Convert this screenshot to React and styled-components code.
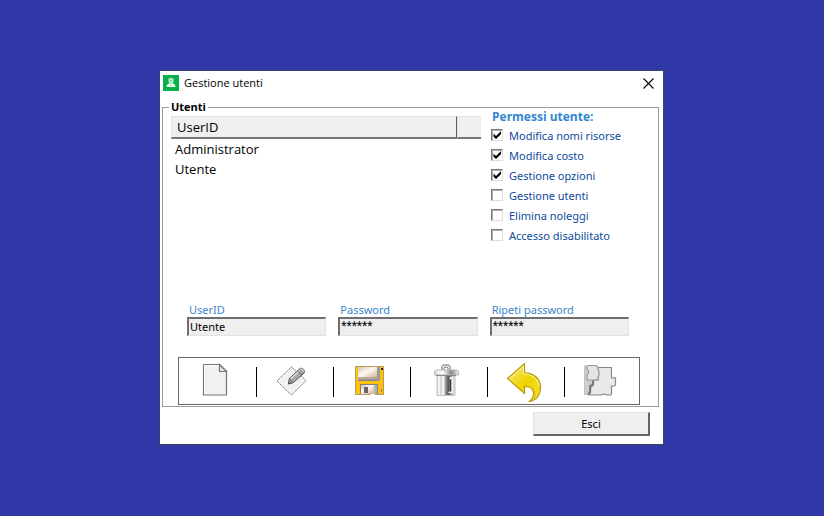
import { useState } from "react";
import styled, { createGlobalStyle } from "styled-components";

const PERMISSIONS = [
  { id: "risorse", label: "Modifica nomi risorse", checked: true },
  { id: "costo", label: "Modifica costo", checked: true },
  { id: "opzioni", label: "Gestione opzioni", checked: true },
  { id: "utenti", label: "Gestione utenti", checked: false },
  { id: "noleggi", label: "Elimina noleggi", checked: false },
  { id: "accesso", label: "Accesso disabilitato", checked: false },
];

const USERS = ["Administrator", "Utente"];

const AppIcon = () => (
  <svg width="16" height="16" viewBox="0 0 16 16" aria-hidden="true">
    <rect width="16" height="16" fill="#06b04c" />
    <path d="M5.500 4.200c.5-1.600 4.500-1.600 5 0v2.300l-1 1.500h-3l-1-1.500z" fill="#c9f0d7" />
    <path d="M6.800 4.500h2.400v1.800H6.800z" fill="#6fd08f" />
    <path d="M3.500 12c0-2.600 1.600-3.400 3-3.800h3c1.400.4 3 1.200 3 3.800z" fill="#e9fbf0" />
    <path d="M7.300 9.500h1.500v1H7.300z" fill="#8fdba9" />
  </svg>
);

const CloseIcon = () => (
  <svg width="11" height="11" viewBox="0 0 11 11" aria-hidden="true">
    <path d="M.5.5l10 10M10.500.5l-10 10" stroke="#000" strokeWidth="1.100" />
  </svg>
);

const NewIcon = () => (
  <svg width="40" height="40" viewBox="0 0 40 40" aria-hidden="true">
    <defs>
      <linearGradient id="fold" x1="0" y1="1" x2="1" y2="0">
        <stop offset="0" stopColor="#fff" />
        <stop offset="1" stopColor="#aaa" />
      </linearGradient>
    </defs>
    <path d="M6 2.500h15.500l7 7v23.500H5.500V3z" fill="#f1f1f1" stroke="#767676" strokeWidth="1.200" />
    <path d="M6.500 32V3.500h14" fill="none" stroke="#fff" />
    <path d="M21.500 2.500v7h7z" fill="url(#fold)" stroke="#767676" strokeWidth="1.200" />
  </svg>
);

const EditIcon = () => (
  <svg width="40" height="40" viewBox="0 0 40 40" aria-hidden="true">
    <path d="M16.500 5L31 18.500 16.500 33 2 19z" fill="#f1f1f1" stroke="#666" strokeDasharray="1.500 .7" />
    <path d="M16.500 6.500L29.500 18.500 16.500 31.500 3.500 19z" fill="none" stroke="#fff" />
    <path d="M13.500 22l.8-5.500L24.500 7l4.700 4L18 20.800z" fill="#a8a8a8" stroke="#555" />
    <path d="M15.500 16.800L24.500 8.800" stroke="#ddd" strokeWidth="1.500" />
    <path d="M14.300 16.500l3.700 4.300M22.500 9l4.500 4" stroke="#666" />
    <path d="M24.500 7c1.800-2.200 6.300.5 4.700 4" fill="#ccc" stroke="#777" />
    <path d="M13.300 22.200l.5-2.500 1.700 1.800z" fill="#444" />
  </svg>
);

const SaveIcon = () => (
  <svg width="40" height="40" viewBox="0 0 40 40" aria-hidden="true">
    <defs>
      <linearGradient id="plate" x1="0" y1="0" x2="1" y2="1">
        <stop offset="0" stopColor="#dcbda5" />
        <stop offset=".45" stopColor="#fdf9f5" />
        <stop offset="1" stopColor="#d5ad8b" />
      </linearGradient>
    </defs>
    <path d="M3.500 4.500h28v28h-8l-2-1h-2l-1 1h-15z" fill="#ffc20a" stroke="#b59b5d" />
    <path d="M6 5h22v14H6z" fill="#858585" />
    <path d="M6 5h20v10.500H6z" fill="url(#plate)" />
    <path d="M6 15.500h20v2H6z" fill="#b9aca0" />
    <path d="M25 5h3v14h-3z" fill="#9a9a9a" />
    <path d="M29 6h2v2h-2z" fill="#332600" />
    <path d="M8 22h18v10H8z" fill="#808080" />
    <path d="M9 23h13v9H9z" fill="url(#plate)" />
    <path d="M22 23h3v9h-3z" fill="#b4b4b4" />
    <path d="M12 25h4v6h-4z" fill="#666" />
    <path d="M29 27h1v3h-1z" fill="#a5803a" />
  </svg>
);

const DeleteIcon = () => (
  <svg width="40" height="40" viewBox="0 0 40 40" aria-hidden="true">
    <defs>
      <linearGradient id="can">
        <stop offset="0" stopColor="#ccc" />
        <stop offset=".12" stopColor="#fff" />
        <stop offset=".22" stopColor="#ccc" />
        <stop offset=".35" stopColor="#fff" />
        <stop offset=".5" stopColor="#888" />
        <stop offset=".65" stopColor="#555" />
        <stop offset=".85" stopColor="#bbb" />
        <stop offset="1" stopColor="#e6e6e6" />
      </linearGradient>
      <linearGradient id="lid">
        <stop offset="0" stopColor="#ddd" />
        <stop offset=".35" stopColor="#fff" />
        <stop offset=".7" stopColor="#888" />
        <stop offset="1" stopColor="#eee" />
      </linearGradient>
    </defs>
    <path d="M13 8V5l1.500-2h5L21 5v3" fill="none" stroke="#b0b0b0" strokeWidth="2" />
    <path d="M15 8V6l1-1h2l1 1v2" fill="none" stroke="#777" />
    <path d="M8 13h18v20.500H8z" fill="url(#can)" stroke="#c4c4c4" />
    <path d="M20.500 16.500l3-1v15h-4" fill="none" stroke="#f4f4f4" strokeWidth="1.500" />
    <path d="M21.500 18v11" stroke="#333" />
    <path d="M5.500 9l2-1h20l2 1v4h-24z" fill="url(#lid)" stroke="#b8b8b8" />
    <path d="M7 13.500h20" stroke="#888" />
  </svg>
);

const UndoIcon = () => (
  <svg width="40" height="40" viewBox="0 0 40 40" aria-hidden="true">
    <defs>
      <linearGradient id="arrow" x1="0" y1="0" x2="1" y2="1">
        <stop offset="0" stopColor="#f9ed8d" />
        <stop offset=".5" stopColor="#f0d400" />
        <stop offset="1" stopColor="#f6df38" />
      </linearGradient>
    </defs>
    <path
      d="M1.500 16.500L18.500 1.500v9.300c9.500 0 16 6.200 16 14.500 0 7.700-4.300 13.200-11 14.200 5.500-4.300 6.800-15-5-15v7z"
      fill="url(#arrow)"
      stroke="#b89a08"
      strokeWidth="1.200"
    />
    <path d="M3.800 16.600L17.300 4.500v7.300c8.500.2 14.700 5 15.700 12" fill="none" stroke="#fbf4b0" />
    <path d="M17.500 23.300c9-.4 13.500 5.500 10.500 13" fill="none" stroke="#e8c700" strokeWidth="1.500" />
  </svg>
);

const ModuleIcon = () => (
  <svg width="40" height="40" viewBox="0 0 40 40" aria-hidden="true">
    <path d="M2 3.500h4V18h5v4l-3 2v6l-2 3H2z" fill="#cdcdcd" />
    <path
      d="M16 5.500h13.500v10.500h1.500l1-.5 1.500.8v6.500l-1 1.200h-3v8l-1 1h-4l-1-.7h-3l-1 .7H8l1-8 2.500-2V18H16z"
      fill="#e9e9e9"
      stroke="#8a8a8a"
      strokeWidth="1.200"
    />
    <path d="M11 18v4.500L8 24v5.500L6 33" fill="none" stroke="#757575" strokeWidth="1.800" />
    <path
      d="M5 4.500l1-1h8l2 1.500v3l1 1.500v4L16 15v2l-1.500 1H6l-1-1v-4l1.500-2V9L5 7z"
      fill="#e4e4e4"
      stroke="#999"
      strokeWidth="1.200"
    />
    <path d="M2.500 3.500v30" stroke="#b5b5b5" strokeDasharray="1 1" />
  </svg>
);

const TOOLS = [
  { name: "Nuovo", Icon: NewIcon },
  { name: "Modifica", Icon: EditIcon },
  { name: "Salva", Icon: SaveIcon },
  { name: "Elimina", Icon: DeleteIcon },
  { name: "Annulla", Icon: UndoIcon },
  { name: "Moduli", Icon: ModuleIcon },
];

const App = () => {
  const [permissions, setPermissions] = useState(PERMISSIONS);
  const [form, setForm] = useState({ user: "Utente", password: "******", repeat: "******" });

  const toggle = (id) =>
    setPermissions(permissions.map((p) => (p.id === id ? { ...p, checked: !p.checked } : p)));

  const change = (key) => (e) => setForm({ ...form, [key]: e.target.value });

  return (
    <Desktop>
      <GlobalStyle />
      <Window>
        <TitleBar>
          <AppIcon />
          <Title>Gestione utenti</Title>
          <CloseButton type="button" aria-label="Chiudi">
            <CloseIcon />
          </CloseButton>
        </TitleBar>
        <Group>
          <GroupTitle>Utenti</GroupTitle>
          <Columns>
            <UserTable>
              <thead>
                <tr>
                  <HeadCell $divider>UserID</HeadCell>
                  <HeadCell $narrow />
                </tr>
              </thead>
              <tbody>
                {USERS.map((user) => (
                  <tr key={user}>
                    <UserCell colSpan={2}>{user}</UserCell>
                  </tr>
                ))}
              </tbody>
            </UserTable>
            <Permissions>
              <PermissionsTitle>Permessi utente:</PermissionsTitle>
              {permissions.map((p) => (
                <Permission key={p.id}>
                  <Checkbox type="checkbox" checked={p.checked} onChange={() => toggle(p.id)} />
                  {p.label}
                </Permission>
              ))}
            </Permissions>
          </Columns>
          <Fields>
            <Field>
              <FieldLabel htmlFor="user">UserID</FieldLabel>
              <FieldInput id="user" value={form.user} onChange={change("user")} />
            </Field>
            <Field>
              <FieldLabel htmlFor="password">Password</FieldLabel>
              <FieldInput id="password" $masked value={form.password} onChange={change("password")} />
            </Field>
            <Field>
              <FieldLabel htmlFor="repeat">Ripeti password</FieldLabel>
              <FieldInput id="repeat" $masked value={form.repeat} onChange={change("repeat")} />
            </Field>
          </Fields>
          <Toolbar>
            {TOOLS.map(({ name, Icon }) => (
              <Tool key={name}>
                <ToolButton type="button" aria-label={name}>
                  <Icon />
                </ToolButton>
              </Tool>
            ))}
          </Toolbar>
        </Group>
        <Footer>
          <ExitButton type="button">Esci</ExitButton>
        </Footer>
      </Window>
    </Desktop>
  );
};

const GlobalStyle = createGlobalStyle`
  * {
    box-sizing: border-box;
  }
  body {
    margin: 0;
    background: #3139a8;
    color: #000;
    font-family: "Noto Sans", "Open Sans", sans-serif;
    font-size: 11px;
  }
  button,
  input {
    font: inherit;
    color: inherit;
  }
`
const Desktop = styled.main`
  min-height: 100vh;
  display: flex;
  align-items: center;
  justify-content: center;
  padding: 0 1px 1px 0;
`
const Window = styled.section`
  width: 100%;
  max-width: 505px;
  background: #fff;
  border: 1px solid #3c4664;
`
const TitleBar = styled.header`
  display: flex;
  align-items: center;
  gap: 5px;
  height: 24px;
  padding: 0 9px 0 3px;
`
const Title = styled.h1`
  flex: 1;
  margin: 0;
  padding-bottom: 2px;
  font-family: "Open Sans", sans-serif;
  font-size: 11px;
  font-weight: 400;
`
const CloseButton = styled.button`
  display: flex;
  padding: 0;
  border: 0;
  background: none;
`
const Group = styled.fieldset`
  min-width: 0;
  margin: 5px 4px 0 2px;
  padding: 2px 18px 1px 8px;
  border: 1px solid #9b9b9b;
`
const GroupTitle = styled.legend`
  margin-left: -2px;
  padding: 0 2px;
  font-family: "Open Sans", sans-serif;
  font-size: 11px;
  font-weight: 700;
  line-height: 14px;
`
const Columns = styled.div`
  display: flex;
  align-items: flex-start;
  gap: 10px;
  min-height: 187px;
`
const UserTable = styled.table`
  flex: 0 1 310px;
  border-collapse: separate;
  border-spacing: 0;
  table-layout: fixed;
  font-family: "Open Sans", sans-serif;
  font-size: 13px;
  text-align: left;
`
const HeadCell = styled.th`
  width: ${({ $narrow }) => ($narrow ? "24px" : "auto")};
  height: 23px;
  padding: 0 5px;
  background: #efefef;
  border: 1px solid #e2e2e2;
  border-right: ${({ $divider }) => ($divider ? "1px solid #5f5f5f" : "0")};
  border-bottom: 2px solid #777;
  font-weight: 400;
  line-height: 20px;
`
const UserCell = styled.td`
  height: 20px;
  padding: 0 4px;
  line-height: 20px;
`
const Permissions = styled.div`
  flex: 1;
  margin-top: -6px;
`
const PermissionsTitle = styled.h2`
  margin: 0 0 1px;
  padding-left: 1px;
  color: #2f86cf;
  font-family: "Open Sans", sans-serif;
  font-size: 12px;
  font-weight: 700;
  line-height: 14px;
`
const Permission = styled.label`
  display: flex;
  align-items: center;
  gap: 6px;
  height: 20px;
  color: #0d4a9c;
  white-space: nowrap;
`
const Checkbox = styled.input`
  appearance: none;
  flex: none;
  width: 12px;
  height: 12px;
  margin: 0;
  background: #fff;
  border: 1px solid;
  border-color: #777 #dcdcdc #dcdcdc #777;
  box-shadow: inset 1px 1px 0 #b0b0b0;

  &:checked {
    background: url("data:image/svg+xml,%3Csvg xmlns='http://www.w3.org/2000/svg' viewBox='0 0 10 10'%3E%3Cpath d='M1.500 3.500v3L4 9l5-5V1L4 6z'/%3E%3C/svg%3E") center / 10px no-repeat #fff;
  }
`
const Fields = styled.div`
  display: grid;
  grid-template-columns: repeat(3, 1fr);
  gap: 12px;
  padding: 0 11px 0 16px;
`
const Field = styled.div`
  display: flex;
  flex-direction: column;
  min-width: 0;
`
const FieldLabel = styled.label`
  padding-left: 2px;
  color: #3b86cc;
  line-height: 14px;
`
const FieldInput = styled.input`
  width: 100%;
  height: 19px;
  padding: 0 1px 2px;
  background: #efefef;
  border: 2px solid;
  border-color: #6e6e6e #e2e2e2 #e2e2e2 #6e6e6e;
  border-right-width: 1px;
  border-bottom-width: 1px;
  border-radius: 0;
  outline: 0;
  font-family: ${({ $masked }) => ($masked ? "Roboto, sans-serif" : "inherit")};
  font-size: ${({ $masked }) => ($masked ? "12px" : "11px")};
`
const Toolbar = styled.ul`
  display: flex;
  list-style: none;
  margin: 21px 0 0 7px;
  padding: 4px 0 2px 1px;
  border: 1px solid #666;
`
const Tool = styled.li`
  display: flex;
  align-items: center;
  flex: 0 1 77px;

  &:last-child {
    flex: 1;
  }
  &:not(:last-child)::after {
    content: "";
    width: 1px;
    height: 30px;
    background: #000;
  }
`
const ToolButton = styled.button`
  flex: 1;
  display: flex;
  justify-content: center;
  padding: 0;
  border: 0;
  background: none;
`
const Footer = styled.footer`
  display: flex;
  justify-content: flex-end;
  padding: 5px 13px 8px;
`
const ExitButton = styled.button`
  width: 117px;
  height: 24px;
  padding: 0;
  background: #efefef;
  border: 1px solid;
  border-color: #e2e2e2 #666 #666 #e2e2e2;
  border-right-width: 2px;
  border-bottom-width: 2px;
`

export default App
